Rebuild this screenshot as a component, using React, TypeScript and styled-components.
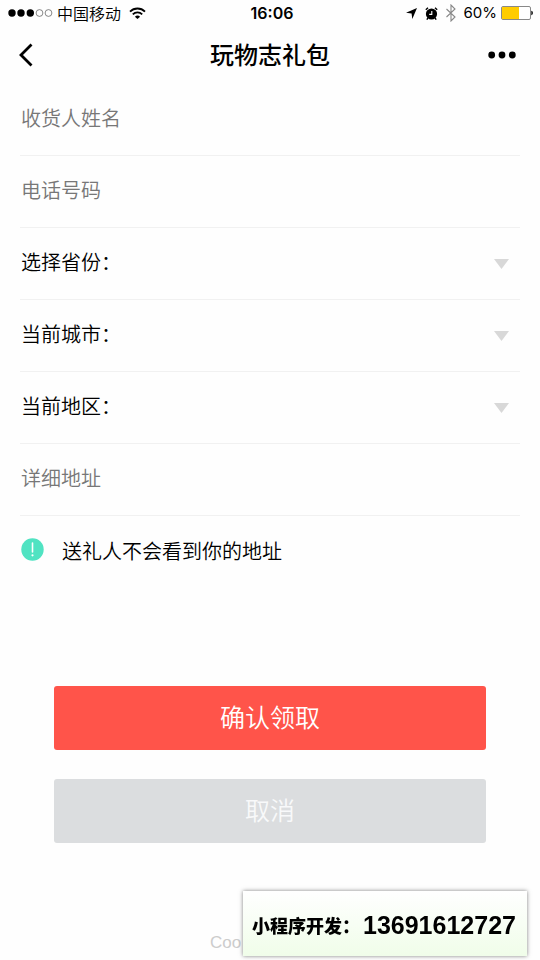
import React from "react";
import styled, { createGlobalStyle } from "styled-components";

const GlobalStyle = createGlobalStyle`
  * { box-sizing: border-box; }
  body {
    margin: 0;
    background: #fefefe;
    color: #000;
    font-family: "Noto Sans CJK SC", sans-serif;
    font-weight: 350;
  }
  button, input, select { font-family: inherit; }
`;

const Page = styled.div`
  display: flex;
  flex-direction: column;
  min-height: 100vh;
`;

const StatusBar = styled.div`
  display: grid;
  grid-template-columns: 1fr auto 1fr;
  align-items: center;
  height: 26px;
  padding: 0 8px;
  font-size: 16px;
  line-height: 26px;
`;

const StatusGroup = styled.div<{ $end?: boolean }>`
  display: flex;
  align-items: center;
  justify-content: ${(p) => (p.$end ? "flex-end" : "flex-start")};
`;

const Signal = styled.svg`
  margin-right: 4px;
`;

const Wifi = styled.svg`
  margin-left: 8px;
`;

const Clock = styled.time`
  padding-left: 4px;
  font-family: Inter, sans-serif;
  font-size: 16px;
  font-weight: 600;
`;

const Percent = styled.span`
  margin: 0 4px 0 8px;
  font-family: Inter, "Liberation Sans", sans-serif;
  font-size: 15px;
  font-weight: 400;
`;

const StatusIcon = styled.svg`
  margin-left: 8px;
`;

const Battery = styled.svg`
  flex: none;
  margin-right: -1px;
`;

const NavBar = styled.header`
  display: grid;
  grid-template-columns: 48px 1fr 48px;
  align-items: center;
  height: 58px;
  padding: 0 14px;
`;

const Title = styled.h1`
  margin: 0;
  padding-bottom: 2px;
  text-align: center;
  font-size: 24px;
  font-weight: 500;
  line-height: 36px;
`;

const IconButton = styled.button<{ $end?: boolean }>`
  display: flex;
  align-items: center;
  justify-content: ${(p) => (p.$end ? "flex-end" : "flex-start")};
  height: 44px;
  padding: 0 10px 0 4px;
  border: 0;
  background: none;
  color: #000;
`;

const Form = styled.form`
  display: flex;
  flex-direction: column;
  padding: 0 20px;
`;

const Row = styled.label`
  display: flex;
  align-items: center;
  height: 72px;
  padding: 0 11px 0 1px;
  border-bottom: 1px solid #f1f1f1;
  font-size: 20px;
  line-height: 30px;
`;

const RowLabel = styled.span`
  padding-bottom: 4px;
`;

const TextInput = styled.input`
  flex: 1;
  min-width: 0;
  height: 40px;
  padding: 0 0 4px;
  border: 0;
  outline: 0;
  background: none;
  color: #000;
  font-size: 20px;
  &::placeholder {
    color: #777;
    font-weight: 350;
    opacity: 1;
  }
`;

const Select = styled.select`
  flex: 1;
  min-width: 0;
  height: 40px;
  border: 0;
  outline: 0;
  appearance: none;
  background: none;
  font-size: 20px;
`;

const Notice = styled.p`
  display: flex;
  align-items: center;
  gap: 18px;
  height: 70px;
  margin: 0;
  padding-left: 1px;
  font-size: 20px;
  line-height: 30px;
`;

const NoticeIcon = styled.svg`
  margin-bottom: 4px;
`;

const Actions = styled.div`
  display: flex;
  flex-direction: column;
  gap: 29px;
  padding: 100px 34px 0;
`;

const ActionButton = styled.button<{ $primary?: boolean }>`
  height: 64px;
  padding: 0 0 4px;
  border: 0;
  border-radius: 3px;
  background: ${(p) => (p.$primary ? "#ff544a" : "#dbdddf")};
  color: ${(p) => (p.$primary ? "#fff" : "#f8f9fa")};
  font-size: 25px;
  font-weight: 350;
`;

const Footer = styled.footer`
  margin-top: auto;
  padding: 0 0 5px 210px;
  color: #ccc;
  font-family: "Liberation Sans", Arial, sans-serif;
  font-size: 17px;
  line-height: 24px;
`;

const Banner = styled.aside`
  position: fixed;
  right: 13px;
  bottom: 4px;
  display: flex;
  align-items: center;
  width: 284px;
  height: 65px;
  padding: 2px 0 0 9px;
  background: linear-gradient(#fff, #f0fde9);
  box-shadow: 0 0 4px rgba(0, 0, 0, 0.5);
  white-space: nowrap;
`;

const BannerLabel = styled.span`
  width: 111px;
  font-size: 18px;
  font-weight: 900;
`;

const BannerPhone = styled.strong`
  font-family: "Liberation Sans", Arial, sans-serif;
  font-size: 25px;
  line-height: 30px;
`;

function TextRow({ label, type = "text" }: { label: string; type?: string }) {
  return (
    <Row>
      <TextInput type={type} placeholder={label} aria-label={label} />
    </Row>
  );
}

function SelectRow({ label }: { label: string }) {
  return (
    <Row>
      <RowLabel>{label}：</RowLabel>
      <Select aria-label={label} defaultValue="">
        <option value="" />
      </Select>
      <svg width="15" height="10" viewBox="0 0 15 10" aria-hidden="true">
        <path d="M0 0h15L7.5 10z" fill="#d8d8d8" />
      </svg>
    </Row>
  );
}

export default function App() {
  return (
    <Page>
      <GlobalStyle />
      <StatusBar>
        <StatusGroup>
          <Signal width="45" height="10" viewBox="0 0 45 10" aria-hidden="true">
            <circle cx="4" cy="5" r="3.7" />
            <circle cx="13" cy="5" r="3.7" />
            <circle cx="22.3" cy="5" r="3.7" />
            <circle cx="31.5" cy="5" r="3.4" fill="none" stroke="#555" strokeWidth=".7" />
            <circle cx="40.5" cy="5" r="3.4" fill="none" stroke="#555" strokeWidth=".7" />
          </Signal>
          <span>中国移动</span>
          <Wifi width="17" height="12" viewBox="0 0 17 12" aria-hidden="true">
            <g fill="none" stroke="#000" strokeWidth="1.8">
              <path d="M1 4.6a10.6 10.6 0 0 1 15 0" />
              <path d="M3.8 7.4a6.7 6.7 0 0 1 9.4 0" />
            </g>
            <path d="M5.9 9.7a3.7 3.7 0 0 1 5.2 0L8.5 12z" />
          </Wifi>
        </StatusGroup>
        <Clock>16:06</Clock>
        <StatusGroup $end>
          <svg width="11" height="11" viewBox="0 0 11 11" aria-hidden="true">
            <path d="M11 0L6.3 11 5.6 5.5 0 4.8z" />
          </svg>
          <StatusIcon width="13" height="13" viewBox="0 0 13 13" aria-hidden="true">
            <circle cx="6.5" cy="7" r="5.6" />
            <path d="M.8 2.8L3 .8M12.2 2.8L10 .8M3 11l-1.2 1.6M10 11l1.2 1.6" stroke="#000" strokeWidth="1.4" />
            <path d="M6.8 4v3.4H4.2" fill="none" stroke="#fff" strokeWidth="1.1" />
          </StatusIcon>
          <StatusIcon width="10" height="18" viewBox="0 0 10 18" aria-hidden="true">
            <path d="M.5 5l8.5 8-4 4V1l4 4-8.5 8" fill="none" stroke="#888" strokeWidth="1.1" />
          </StatusIcon>
          <Percent>60%</Percent>
          <Battery width="32" height="14" viewBox="0 0 32 14" aria-hidden="true">
            <rect x=".5" y=".5" width="29" height="13" rx="1.5" fill="#fff" stroke="#888" />
            <path d="M1 1h17v12H1z" fill="#fc0" />
            <path d="M30.3 4.8c2.1.5 2.1 3.9 0 4.4z" />
          </Battery>
        </StatusGroup>
      </StatusBar>

      <NavBar>
        <IconButton type="button" aria-label="返回">
          <svg width="16" height="24" viewBox="0 0 16 24" aria-hidden="true">
            <path d="M13.5 1.5L3 12l10.5 10.5" fill="none" stroke="#000" strokeWidth="2.8" />
          </svg>
        </IconButton>
        <Title>玩物志礼包</Title>
        <IconButton type="button" aria-label="更多" $end>
          <svg width="28" height="8" viewBox="0 0 28 8" aria-hidden="true">
            <circle cx="3.7" cy="4" r="3.4" />
            <circle cx="14" cy="4" r="3.4" />
            <circle cx="24.3" cy="4" r="3.4" />
          </svg>
        </IconButton>
      </NavBar>

      <Form onSubmit={(e) => e.preventDefault()}>
        <TextRow label="收货人姓名" />
        <TextRow label="电话号码" type="tel" />
        <SelectRow label="选择省份" />
        <SelectRow label="当前城市" />
        <SelectRow label="当前地区" />
        <TextRow label="详细地址" />
        <Notice>
          <NoticeIcon width="23" height="23" viewBox="0 0 23 23" aria-hidden="true">
            <circle cx="11.5" cy="11.5" r="11.2" fill="#50e3c2" />
            <path d="M11.5 5v9" stroke="#fff" strokeWidth="1.6" strokeLinecap="round" />
            <circle cx="11.5" cy="17.3" r="1.1" fill="#fff" />
          </NoticeIcon>
          送礼人不会看到你的地址
        </Notice>
        <Actions>
          <ActionButton type="submit" $primary>确认领取</ActionButton>
          <ActionButton type="button">取消</ActionButton>
        </Actions>
      </Form>

      <Footer>Coo</Footer>

      <Banner>
        <BannerLabel>小程序开发：</BannerLabel>
        <BannerPhone>13691612727</BannerPhone>
      </Banner>
    </Page>
  );
}
